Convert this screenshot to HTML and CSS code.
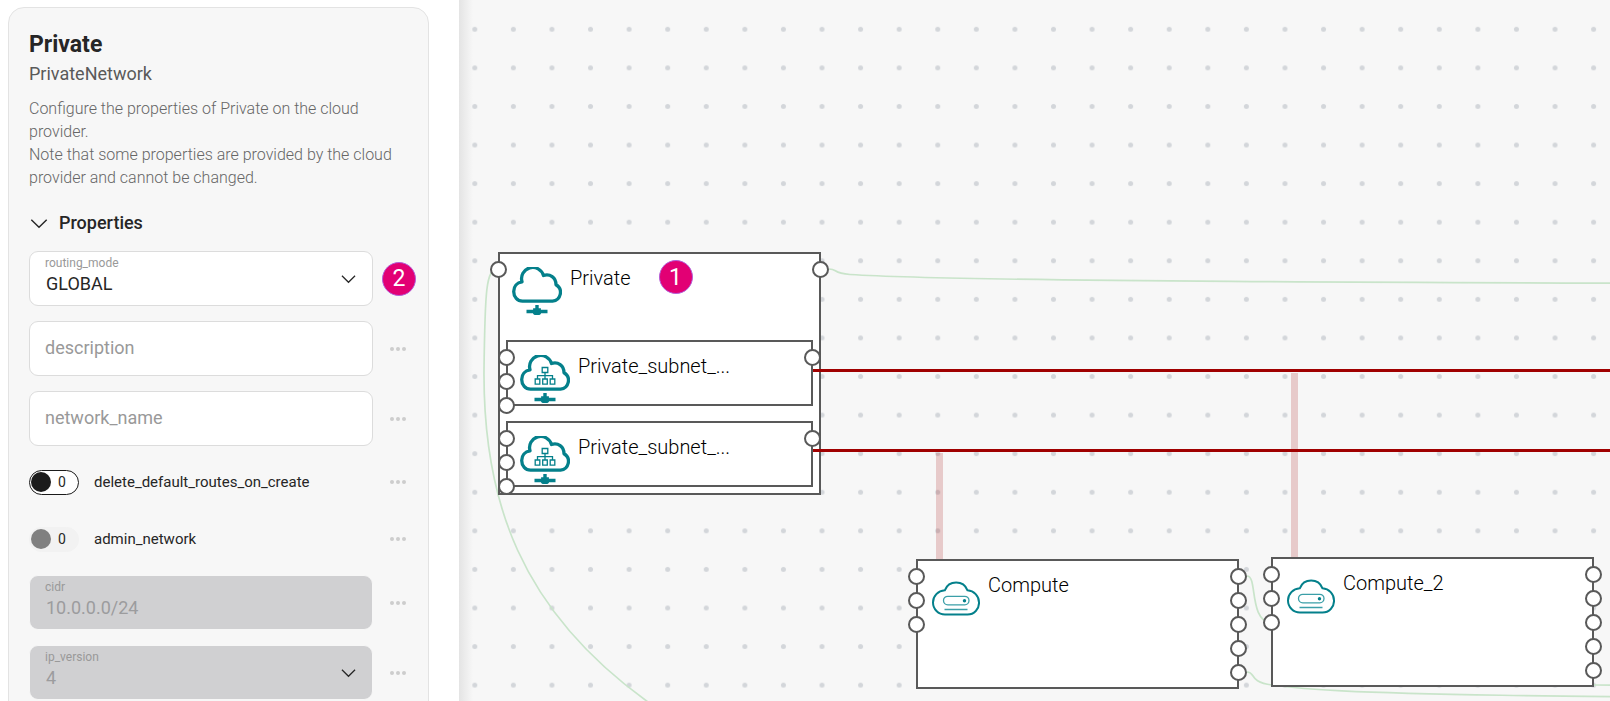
FILE: index.html
```html
<!DOCTYPE html>
<html lang="en">
<head>
<meta charset="utf-8">
<title>Private network designer</title>
<link rel="stylesheet" href="styles.css">
</head>
<body>
<svg class="defs" aria-hidden="true">
  <symbol id="i-chevron" viewBox="0 0 16 10"><path d="M1 1.5 8 8.5 15 1.5" fill="none" stroke="currentColor" stroke-width="1.3"/></symbol>
  <symbol id="i-more" viewBox="0 0 16 4"><g fill="currentColor"><circle cx="2" cy="2" r="2"/><circle cx="8" cy="2" r="2"/><circle cx="14" cy="2" r="2"/></g></symbol>
  <symbol id="i-network" viewBox="0 0 50 48">
    <path d="M10.500 34.200H40.500A8.800 8.800 0 0 0 44 17.800C44 10.500 38 6.500 31.500 8.500A11.200 11.200 0 0 0 10 14.800C5 15.500 1.700 19.500 1.700 24.500C1.700 30 5.500 34.200 10.500 34.200Z" fill="none" stroke="#04808b" stroke-width="3.300" stroke-linejoin="round"/>
    <path d="M23.300 38h3.400v3.200h2.200v1.500h6.600v3.600h-6.600v.7l-1.500 1h-4.800l-1.500-1v-.7h-6.600v-3.600h6.600v-1.500h2.200z" fill="#04808b"/>
  </symbol>
  <symbol id="i-subnet" viewBox="0 0 50 48">
    <use href="#i-network" width="50" height="48"/>
    <path d="M22.200 12.500h5.600v5h-5.600zM25 17.500v6M17.500 24v-3.300h15V24M15.200 24h4.600v5.200h-4.600zM22.700 24h4.600v5.200h-4.600zM30.200 24h4.600v5.200h-4.600z" fill="none" stroke="#04808b" stroke-width="1.300"/>
  </symbol>
  <symbol id="i-compute" viewBox="0 0 48 36">
    <path d="M13 34.500H35.500A11.500 11.500 0 0 0 47 22.500C47 16 42 10.800 35.500 10.300A12.200 12.200 0 0 0 12.800 10.300C6 10.800 1 16 1 22.500A12 12 0 0 0 13 34.500Z" fill="none" stroke="#04808b" stroke-width="2" stroke-linejoin="round"/>
    <rect x="11.500" y="16.300" width="25.500" height="8.600" rx="4.300" fill="none" stroke="#3b9fa8" stroke-width="1.300"/>
    <circle cx="32.500" cy="20.700" r="1.700" fill="#04808b"/>
    <path d="M12.500 29.500h23" stroke="#3b9fa8" stroke-width="1.500"/>
  </symbol>
</svg>
<div class="app">
  <aside class="sidebar">
    <section class="card">
      <h1 class="title">Private</h1>
      <p class="type">PrivateNetwork</p>
      <p class="help">Configure the properties of Private on the cloud provider.<br>Note that some properties are provided by the cloud provider and cannot be changed.</p>
      <button class="section-toggle" type="button" aria-expanded="true"><svg class="chevron"><use href="#i-chevron"/></svg>Properties</button>
      <form class="form">
        <div class="row">
          <div class="field filled"><label for="routing">routing_mode</label><select id="routing"><option>GLOBAL</option></select><svg class="arrow"><use href="#i-chevron"/></svg></div>
          <span class="badge">2</span>
        </div>
        <div class="row">
          <div class="field"><input id="description" type="text" placeholder="description" aria-label="description"></div>
          <button class="more" type="button" aria-label="More"><svg><use href="#i-more"/></svg></button>
        </div>
        <div class="row">
          <div class="field"><input id="name" type="text" placeholder="network_name" aria-label="network_name"></div>
          <button class="more" type="button" aria-label="More"><svg><use href="#i-more"/></svg></button>
        </div>
        <div class="row switch-row">
          <label class="switch"><input type="checkbox"><span class="track">0</span><span>delete_default_routes_on_create</span></label>
          <button class="more" type="button" aria-label="More"><svg><use href="#i-more"/></svg></button>
        </div>
        <div class="row switch-row">
          <label class="switch"><input type="checkbox" disabled><span class="track">0</span><span>admin_network</span></label>
          <button class="more" type="button" aria-label="More"><svg><use href="#i-more"/></svg></button>
        </div>
        <div class="row">
          <div class="field filled disabled"><label for="cidr">cidr</label><input id="cidr" type="text" value="10.0.0.0/24" disabled></div>
          <button class="more" type="button" aria-label="More"><svg><use href="#i-more"/></svg></button>
        </div>
        <div class="row">
          <div class="field filled disabled"><label for="ipv">ip_version</label><select id="ipv" disabled><option>4</option></select><svg class="arrow"><use href="#i-chevron"/></svg></div>
          <button class="more" type="button" aria-label="More"><svg><use href="#i-more"/></svg></button>
        </div>
      </form>
    </section>
  </aside>
  <main class="canvas">
    <svg class="wires" aria-hidden="true">
      <defs><pattern id="dots" x="-3.500" y="10" width="38.580" height="38.580" patternUnits="userSpaceOnUse"><circle cx="19.290" cy="19.290" r="2.500" fill="#d3d6da"/></pattern></defs>
      <rect width="100%" height="100%" fill="url(#dots)"/>
      <g transform="translate(-459 0)" fill="none">
        <g stroke="#c9e4ca" stroke-width="1.700">
          <path d="M498 269C486 269 485 290 484 370C483 500 520 610 648 702"/>
          <path d="M829 269C838 269 832 273 850 274.500C950 281 1250 283 2400 285"/>
          <path d="M1247 576C1258 576 1248 620 1272 624"/>
          <path d="M1247 672C1256 672 1248 682 1272 685C1340 694 1440 698 2400 701"/>
          <path d="M1594 685L2400 692"/>
        </g>
        <path d="M939.500 453V560M1294.500 373V559" stroke="#a00000" stroke-opacity=".18" stroke-width="7"/>
      </g>
    </svg>
    <article class="node network">
      <header class="head"><svg class="icon"><use href="#i-network"/></svg><span>Private</span><span class="badge">1</span></header>
      <span class="ports in"><i></i></span><span class="ports out"><i></i></span>
      <div class="subnets">
        <article class="subnet">
          <header class="head"><svg class="icon"><use href="#i-subnet"/></svg><span>Private_subnet_...</span></header>
          <span class="ports in"><i></i><i></i><i></i></span><span class="ports out"><i></i></span>
        </article>
        <article class="subnet">
          <header class="head"><svg class="icon"><use href="#i-subnet"/></svg><span>Private_subnet_...</span></header>
          <span class="ports in"><i></i><i></i><i></i></span><span class="ports out"><i></i></span>
        </article>
      </div>
    </article>
    <svg class="wires links" aria-hidden="true"><path d="M354 370.500H2400M354 450.500H2400" stroke="#a00000" stroke-width="3"/></svg>
    <article class="node compute first">
      <header class="head"><svg class="icon"><use href="#i-compute"/></svg><span>Compute</span></header>
      <span class="ports in"><i></i><i></i><i></i></span><span class="ports out"><i></i><i></i><i></i><i></i><i></i></span>
    </article>
    <article class="node compute second">
      <header class="head"><svg class="icon"><use href="#i-compute"/></svg><span>Compute_2</span></header>
      <span class="ports in"><i></i><i></i><i></i></span><span class="ports out"><i></i><i></i><i></i><i></i><i></i></span>
    </article>
  </main>
</div>
</body>
</html>
```
FILE: styles.css
```css
* { box-sizing: border-box; }
body { margin: 0; font-family: Roboto, "Liberation Sans", sans-serif; color: #262626; background: #fff; }
h1, p { margin: 0; }
button, input, select { font: inherit; color: inherit; }
.defs { position: absolute; width: 0; height: 0; }
.app { display: flex; height: 100vh; overflow: hidden; }

/* Properties panel */
.sidebar { flex: 0 0 459px; padding: 7px 30px 0 8px; }
.card { min-height: 120vh; padding: 21px 6px 20px 20px; border: 1px solid #e3e3e3; border-radius: 16px; background: #f7f7f7; }
.title { font-size: 23px; line-height: 32px; font-weight: 700; }
.type { font-size: 18px; line-height: 25px; color: #5a5a5a; }
.help { margin-top: 11px; padding-right: 16px; font-size: 16px; line-height: 23px; font-weight: 300; color: #666; }
.section-toggle { display: flex; align-items: center; gap: 11px; margin-top: 21px; padding: 0 0 0 1px; border: 0; background: none; font-size: 18px; line-height: 26px; font-weight: 500; }
.chevron { width: 18px; height: 11px; }
.form { display: grid; gap: 15px; margin-top: 15px; }
.row { display: flex; align-items: center; }
.field { position: relative; display: flex; flex-direction: column; flex: 1; height: 55px; padding: 12px 15px 0; border: 1px solid #dcdcdc; border-radius: 9px; background: #fff; }
.field input, .field select { width: 100%; height: 26px; padding: 0; border: 0; outline: 0; background: none; appearance: none; font-size: 18px; opacity: 1; }
.field input::placeholder { color: #999; opacity: 1; }
.filled { padding-top: 3px; }
.filled label { font-size: 12px; line-height: 16px; color: #999; }
.filled input, .filled select { height: 24px; padding-left: 1px; }
.disabled { border-color: #f7f7f7; background: #d0d0d2; }
.disabled input, .disabled select { color: #9c9c9e; }
.arrow { position: absolute; right: 16px; top: 22px; width: 15px; height: 10px; pointer-events: none; }
.more { flex: 0 0 32px; height: 32px; margin: 0 8px 0 9px; padding: 0; border: 0; background: none; color: #cdcdcd; }
.more svg { display: block; width: 16px; height: 4px; margin: 0 auto; }
.badge { display: flex; align-items: center; justify-content: center; width: 34px; height: 34px; border: 1px solid #b45fd8; border-radius: 50%; background: #e20074; color: #fff; font-size: 23px; font-weight: 400; }
.row .badge { margin: 0 6px 0 9px; }
.switch-row { height: 42px; }
.switch { display: flex; flex: 1; align-items: center; gap: 15px; font-size: 15px; }
.switch input { position: absolute; opacity: 0; }
.track { display: flex; align-items: center; gap: 7px; width: 50px; height: 25px; padding-left: 1px; border: 1px solid #1b1b1b; border-radius: 13px; background: #fff; font-size: 14px; }
.track::before { content: ""; width: 20px; height: 20px; border-radius: 50%; background: #1b1b1b; }
.switch input:disabled + .track { border-color: #f2f2f2; background: #f2f2f2; }
.switch input:disabled + .track::before { background: #808080; }

/* Diagram */
.canvas { position: relative; flex: 1; overflow: hidden; background: linear-gradient(90deg, #e4e4e4, #f7f7f7 14px); color: #000; }
.wires { display: block; width: 100%; height: 100%; }
.links { position: absolute; inset: 0; pointer-events: none; }
.node { position: absolute; width: 323px; border: 2px solid #595959; background: #fff; }
.network { left: 39px; top: 252px; }
.first { left: 457px; top: 559px; }
.second { left: 812px; top: 557px; }
.compute { height: 130px; }
.head { display: flex; padding: 13px 0 0 12px; gap: 8px; font-size: 20px; line-height: 23px; font-weight: 300; }
.icon { flex: none; width: 50px; height: 48px; }
.network > .head { height: 86px; }
.head .badge { margin: -7px 0 0 20px; }
.subnets { display: grid; gap: 15px; padding: 0 6px 6px; }
.subnet { position: relative; height: 66px; border: 2px solid #595959; }
.compute .head { padding: 19px 0 0 14px; }
.compute .icon { width: 48px; height: 36px; }
.compute .head span { margin-top: -6px; }
.ports { position: absolute; top: 7px; display: grid; gap: 7px; }
.in { left: -10px; }
.out { right: -10px; }
.ports i { width: 17px; height: 17px; border: 2px solid #595959; border-radius: 50%; background: #fff; }
```
